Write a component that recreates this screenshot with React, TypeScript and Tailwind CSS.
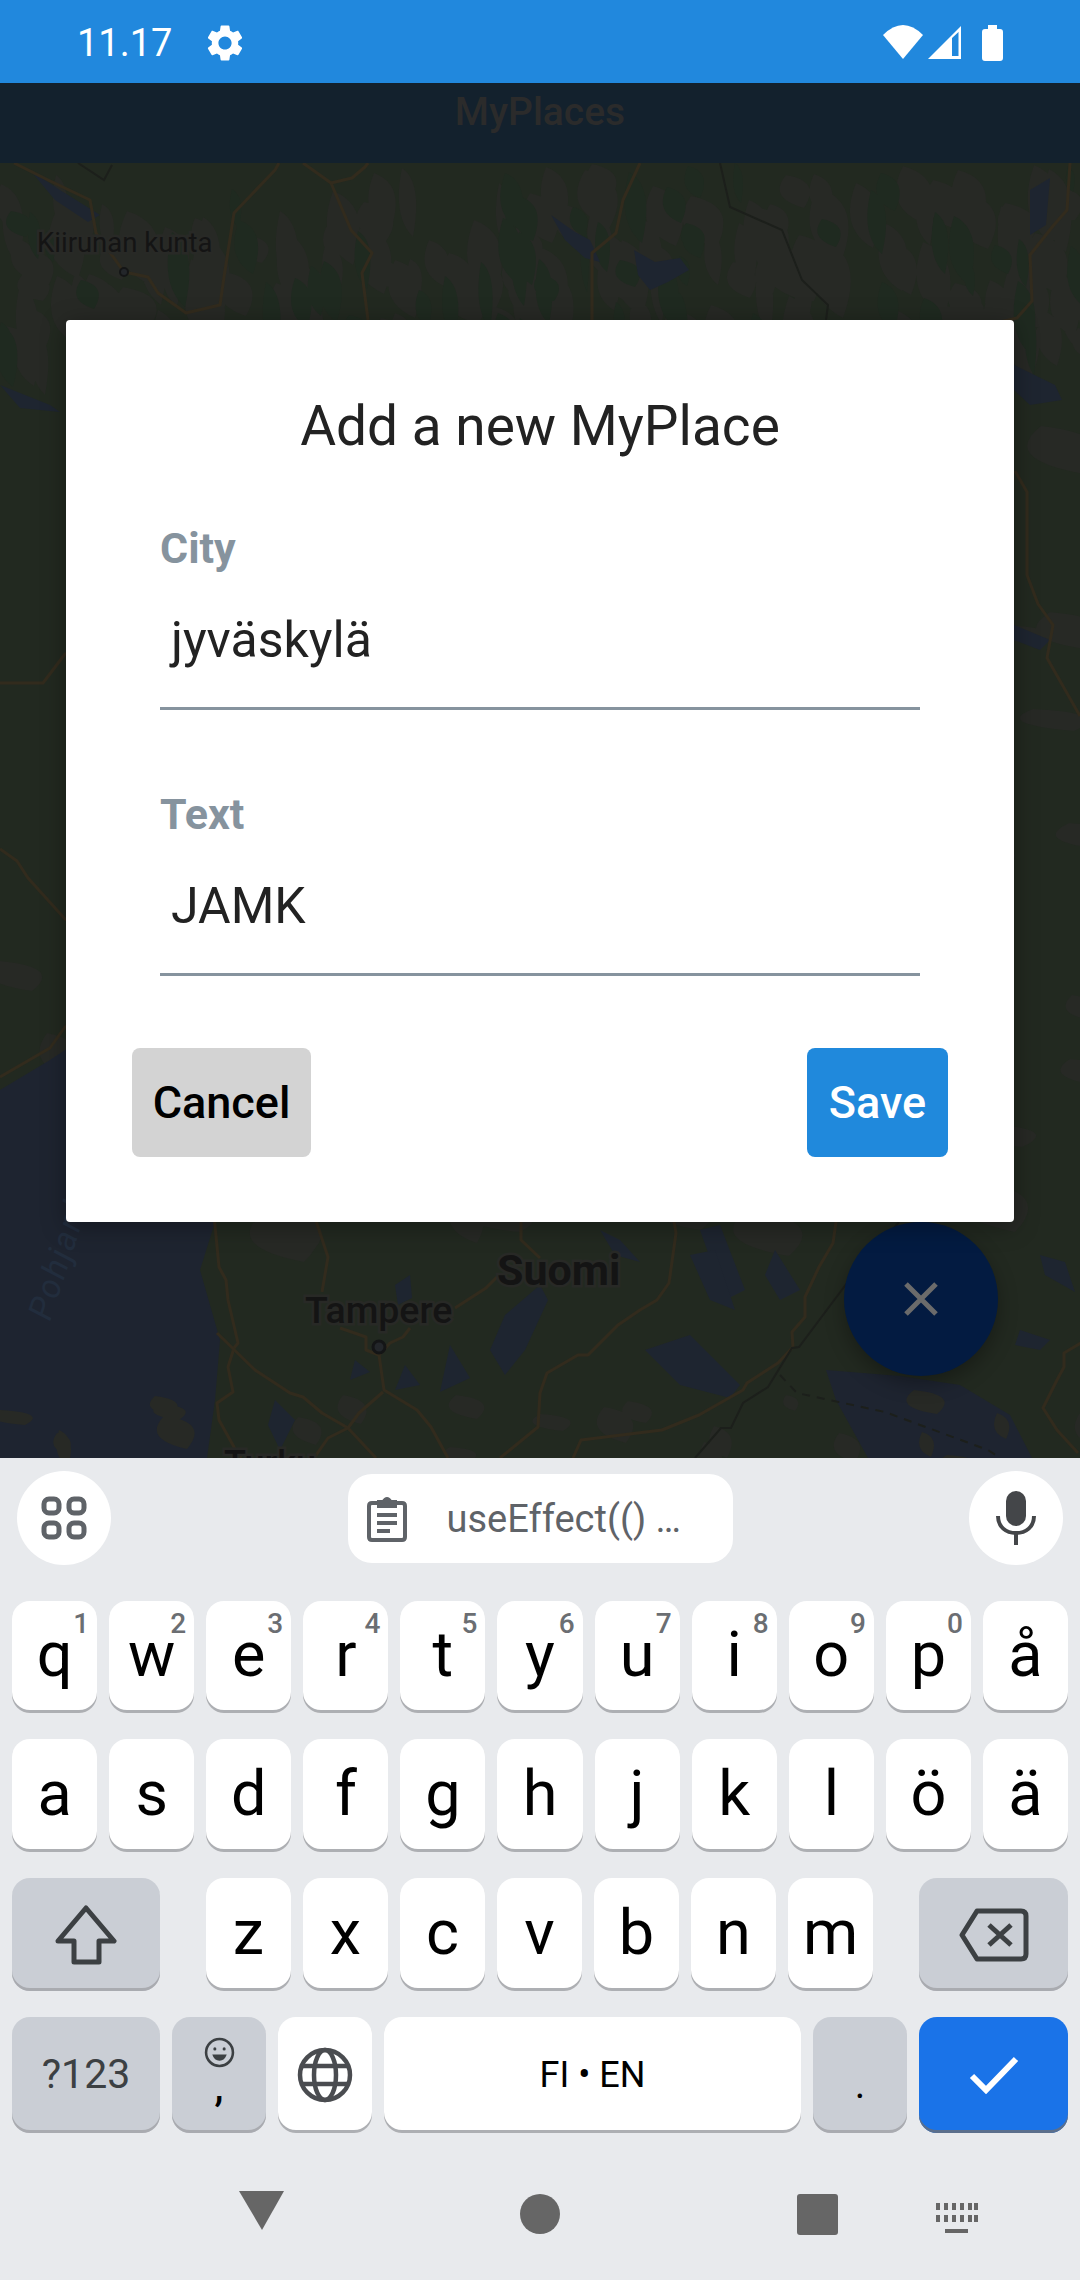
// App.tsx
const ROW_ONE = [
  ['q', '1'], ['w', '2'], ['e', '3'], ['r', '4'], ['t', '5'], ['y', '6'],
  ['u', '7'], ['i', '8'], ['o', '9'], ['p', '0'], ['å', ''],
];
const ROW_TWO = ['a', 's', 'd', 'f', 'g', 'h', 'j', 'k', 'l', 'ö', 'ä'];
const ROW_THREE = ['z', 'x', 'c', 'v', 'b', 'n', 'm'];

const ROADS = [
  'M14 163L48 180L90 200L96 233L124 272L148 277L158 293L186 313L220 305L224 277L234 213L275 170L279 163',
  'M303 163L331 183L351 230L372 253L362 273L368 320',
  'M331 183L352 178L365 167L368 163',
  'M640 163L623 200L616 233L592 253L592 320',
  'M1070 163L1067 210L1053 226L1030 255L1032 301L1017 318L1000 322',
  'M1015 471L1027 492L1027 575L1038 604L1053 625L1047 658L1080 716',
  'M0 683L43 683L65 654L80 650',
  'M0 849L17 861L28 878L65 919L80 925',
  'M0 1077L50 1048L65 1027L80 1018',
  'M214 1215L219 1267L226 1280L228 1300L238 1343L234 1348L228 1367L233 1392L217 1403L219 1420L234 1447L241 1458',
  'M217 1333L255 1370L290 1393L303 1397L322 1413L348 1428L376 1458',
  'M314 1215L328 1257L322 1292',
  'M340 1328L366 1337L366 1350L379 1355L384 1390L417 1410L431 1427L448 1458',
  'M379 1355L390 1343L403 1337L410 1328',
  'M455 1308L486 1288L497 1277',
  'M383 1392L359 1413L348 1428L328 1438L314 1458',
  'M521 1215L521 1240L540 1258',
  'M673 1215L676 1233L669 1283L657 1300L640 1310L618 1325L588 1355L578 1355L547 1373L540 1393L538 1427L500 1458',
  'M837 1215L833 1243L819 1267L805 1297L805 1317L792 1332L793 1347L778 1363L747 1383L743 1390L699 1415L662 1430L581 1440L573 1458',
  'M1081 1343L1064 1353L1064 1367L1057 1380L1043 1408L1057 1430L1078 1453',
];

const BORDERS = [
  'M720 163L730 207L782 230L802 280L828 305L826 320',
  'M899 1222L847 1283L799 1347L792 1348L768 1387L743 1403L731 1428L721 1428L695 1458',
  'M78 163L104 180L112 165',
];

const LAKES = [
  'M551 215L575 232L590 240L600 262L585 258L565 240Z',
  'M634 250L655 262L680 258L689 270L668 282L650 290L638 275Z',
  'M30 170L60 190L100 215L88 222L55 200Z',
  'M700 1230L720 1225L745 1290L725 1300Z',
  'M775 1250L800 1290L780 1300L765 1275Z',
  'M645 1350L690 1335L740 1385L730 1398L680 1385Z',
  'M690 1255L715 1250L735 1310L710 1300Z',
  'M600 1230L615 1255L640 1262L620 1240Z',
  'M505 1315L540 1285L548 1300L525 1350L505 1375L490 1350Z',
  'M395 1285L410 1275L412 1298L398 1305Z',
  'M275 1400L295 1420L280 1450L268 1425Z',
  'M355 1360L370 1372L350 1380Z',
  'M405 1365L420 1385L395 1390Z',
  'M450 1345L470 1378L440 1392Z',
  'M1040 1255L1065 1262L1075 1292L1045 1275Z',
  'M1020 1330L1050 1340L1040 1350L1015 1345Z',
  'M1014 365L1055 385L1062 400L1030 405L1014 390Z',
  'M1014 625L1050 640L1040 650L1014 640Z',
  'M1030 190L1050 178L1046 225L1030 235Z',
  'M0 385L50 405L60 412L20 408Z',
];

// Leaf shaped terrain blotches, seeded so every render draws the same map
const scatter = (seed: number, count: number, minY: number, maxY: number, w: number, h: number) => {
  let s = seed;
  const rnd = () => {
    s = (s * 16807) % 2147483647;
    return s / 2147483647;
  };
  const out: string[] = [];
  for (let i = 0; i < count; i++) {
    const x = rnd() * 1080;
    const y = minY + rnd() * (maxY - minY);
    const bw = w * (0.5 + rnd());
    const bh = h * (0.5 + rnd());
    out.push(
      `M${x.toFixed(0)} ${y.toFixed(0)}Q${(x + bw).toFixed(0)} ${(y + bh * 0.2).toFixed(0)} ${(x + bw * 0.5).toFixed(0)} ${(y + bh).toFixed(0)}Q${(x - bw * 0.5).toFixed(0)} ${(y + bh * 0.7).toFixed(0)} ${x.toFixed(0)} ${y.toFixed(0)}Z`,
    );
  }
  return out.join('');
};

const MapBackground = () => (
  <svg viewBox="0 163 1080 1295" className="absolute inset-0 h-full w-full">
    <rect x="0" y="163" width="1080" height="1295" fill="#222920" />
    <path d={scatter(77, 150, 163, 330, 34, 56)} fill="#272925" />
    <path d={scatter(91, 60, 163, 330, 20, 50)} fill="#1f2a20" />
    <path d={scatter(51, 110, 330, 1220, 60, 34)} fill="#272925" />
    <path d="M0 1090L50 1060L80 1040L190 1100L215 1222L200 1270L220 1340L215 1400L207 1458L0 1458Z" fill="#1e2430" />
    <path d="M868 1458L836 1400L826 1370L900 1376L960 1385L1010 1415L1032 1458Z" fill="#1e2430" />
    <path d={scatter(33, 22, 1385, 1458, 34, 24)} fill="#272925" />
    {LAKES.map((d, i) => <path key={i} d={d} fill="#1e2530" />)}
    {ROADS.map((d, i) => (
      <path key={i} d={d} fill="none" stroke="#322b1d" strokeWidth="3" strokeLinejoin="round" />
    ))}
    {BORDERS.map((d, i) => <path key={i} d={d} fill="none" stroke="#1c1f1b" strokeWidth="2" />)}
    <path d="M780 1375L797 1393L885 1412L988 1450L1000 1458" fill="none" stroke="#1c1f1b" strokeWidth="2" strokeDasharray="8 7" />
    <circle cx="124" cy="272" r="4" fill="#23262a" stroke="#141516" strokeWidth="2" />
    <circle cx="379" cy="1347" r="6" fill="#23262a" stroke="#141516" strokeWidth="3" />
    <g fontFamily="Roboto, sans-serif" fill="#141414" stroke="#282926" strokeWidth="5" style={{ paintOrder: 'stroke' }}>
      <text x="37" y="252" fontSize="27.500">Kiirunan kunta</text>
      <text x="305" y="1323" fontSize="37.500" fontWeight="500">Tampere</text>
      <text x="497" y="1285" fontSize="43" fontWeight="700">Suomi</text>
      <text x="224" y="1476" fontSize="36" fontWeight="500">Turku</text>
    </g>
    <text x="0" y="0" transform="translate(50 1322) rotate(-72)" fontFamily="Roboto, sans-serif" fontStyle="italic" fontSize="34" letterSpacing="2" fill="#222d3d">Pohjanla</text>
  </svg>
);

const StatusBar = () => (
  <div className="flex h-[83px] shrink-0 items-start bg-[#2188dd] text-white">
    <span className="ml-[77px] mt-[21px] text-[38px] leading-[44px]">11.17</span>
    <svg viewBox="0 0 24 24" className="ml-[31px] mt-[21px] h-[44px] w-[44px]" fill="#fff">
      <path d="M19.14 12.94c.04-.3.06-.61.06-.94 0-.32-.02-.64-.07-.94l2.03-1.58c.18-.14.23-.41.12-.61l-1.92-3.32c-.12-.22-.37-.29-.59-.22l-2.39.96c-.5-.38-1.03-.7-1.62-.94l-.36-2.54c-.04-.24-.24-.41-.48-.41h-3.84c-.24 0-.43.17-.47.41l-.36 2.54c-.59.24-1.13.57-1.62.94l-2.39-.96c-.22-.08-.47 0-.59.22L2.74 8.87c-.12.21-.08.47.12.61l2.03 1.58c-.05.3-.09.63-.09.94s.02.64.07.94l-2.03 1.58c-.18.14-.23.41-.12.61l1.92 3.32c.12.22.37.29.59.22l2.39-.96c.5.38 1.03.7 1.62.94l.36 2.54c.05.24.24.41.48.41h3.84c.24 0 .44-.17.47-.41l.36-2.54c.59-.24 1.13-.56 1.62-.94l2.39.96c.22.08.47 0 .59-.22l1.92-3.32c.12-.22.07-.47-.12-.61l-2.01-1.58zM12 15.6c-1.98 0-3.6-1.62-3.6-3.6s1.62-3.6 3.6-3.6 3.6 1.62 3.6 3.6-1.62 3.6-3.6 3.6z" />
    </svg>
    <svg viewBox="0 0 125 40" className="ml-auto mr-[72px] mt-[24px] h-[40px] w-[125px]" fill="#fff">
      <path d="M0 11Q20 -9 40 11L20 35Z" />
      <path fillRule="evenodd" d="M45 35L78 2V35ZM69 14V32H75.500V8Z" />
      <path d="M105 1H114V5H117Q120 5 120 8V34Q120 37 117 37H102Q99 37 99 34V8Q99 5 102 5H105Z" />
    </svg>
  </div>
);

const Field = ({ label, value }: { label: string; value: string }) => (
  <div>
    <div className="h-[50px] text-[43px] font-bold leading-[50px] text-[#86939e]">{label}</div>
    <div className="flex h-[137px] items-center border-b-[3px] border-[#86939e] pl-[11px] text-[50px] text-[#222]">
      {value}
    </div>
  </div>
);

const AddDialog = () => (
  <div className="absolute left-[66px] top-[320px] h-[902px] w-[948px] rounded-[4px] bg-white pt-[74px] shadow-[0_4px_24px_rgba(0,0,0,0.35)]">
    <div className="text-center text-[55px] leading-[64px] text-[#222]">Add a new MyPlace</div>
    <div className="mx-[94px] mt-[65px] flex flex-col gap-[79px]">
      <Field label="City" value="jyväskylä" />
      <Field label="Text" value="JAMK" />
    </div>
    <div className="mx-[66px] mt-[72px] flex justify-between">
      <div className="flex h-[109px] w-[179px] items-center justify-center rounded-[8px] bg-[#d3d3d3] text-[45px] font-medium text-black">
        Cancel
      </div>
      <div className="flex h-[109px] w-[141px] items-center justify-center rounded-[8px] bg-[#2089dc] text-[45px] font-medium text-white">
        Save
      </div>
    </div>
  </div>
);

const Key = ({ label, hint, className }: { label: string; hint?: string; className?: string }) => (
  <div className={`relative flex items-center justify-center rounded-[18px] bg-white pb-[3px] text-[63px] text-black shadow-[inset_0_-3px_0_#adafb3] ${className ?? ''}`}>
    {label}
    {hint && (
      <span className="absolute right-[8px] top-[6px] text-[28px] font-medium leading-[33px] text-[#6b6e72]">{hint}</span>
    )}
  </div>
);

const ModKey = ({ children, className }: { children: React.ReactNode; className: string }) => (
  <div className={`flex items-center justify-center rounded-[18px] bg-[#caced5] shadow-[inset_0_-3px_0_#a9abb0] ${className}`}>
    {children}
  </div>
);

const Keyboard = () => (
  <div className="flex h-[822px] shrink-0 flex-col bg-[#e8eaed]">
    <div className="flex h-[143px] items-start justify-between px-[17px] pt-[13px]">
      <div className="flex h-[94px] w-[94px] items-center justify-center rounded-full bg-white">
        <svg viewBox="0 0 46 44" className="h-[44px] w-[46px]" fill="none" stroke="#5f6368" strokeWidth="5">
          <rect x="3" y="3" width="15" height="14" rx="5" />
          <rect x="28" y="3" width="15" height="14" rx="5" />
          <rect x="3" y="27" width="15" height="14" rx="5" />
          <rect x="28" y="27" width="15" height="14" rx="5" />
        </svg>
      </div>
      <div className="mt-[3px] flex h-[89px] w-[385px] items-center rounded-[24px] bg-white pl-[19px]">
        <svg viewBox="0 0 40 46" className="h-[46px] w-[40px]" fill="none" stroke="#5f6368" strokeWidth="4">
          <path d="M12 7H5Q2 7 2 10V41Q2 44 5 44H35Q38 44 38 41V10Q38 7 35 7H28" />
          <path d="M12 10V6H16.500Q20 0 23.500 6H28V10Z" fill="#5f6368" />
          <path d="M10 19H30M10 27H30M10 35H23" />
        </svg>
        <span className="ml-[40px] whitespace-nowrap text-[38px] leading-[44px] text-[#5f6368]">useEffect(() …</span>
      </div>
      <div className="flex h-[94px] w-[94px] items-center justify-center rounded-full bg-white">
        <svg viewBox="0 0 40 54" className="h-[54px] w-[40px]" fill="#444649">
          <rect x="10" y="0" width="20" height="35" rx="10" />
          <path d="M2 25C2 36 10 42 20 42S38 36 38 25" fill="none" stroke="#444649" strokeWidth="4" />
          <rect x="18" y="40" width="4" height="14" />
        </svg>
      </div>
    </div>

    <div className="flex flex-col gap-[26px] px-[12px]">
      <div className="flex h-[112px] gap-[12px]">
        {ROW_ONE.map(([l, h]) => <Key key={l} label={l} hint={h} className="flex-1" />)}
      </div>
      <div className="flex h-[113px] gap-[12px]">
        {ROW_TWO.map((l) => <Key key={l} label={l} className="flex-1" />)}
      </div>
      <div className="flex h-[113px] justify-between">
        <ModKey className="w-[148px]">
          <svg viewBox="0 0 62 60" className="h-[60px] w-[62px]" fill="none" stroke="#3c4043" strokeWidth="5" strokeLinejoin="round">
            <path d="M31 3L59 36H44V57H19V36H3Z" />
          </svg>
        </ModKey>
        <div className="flex gap-[12px]">
          {ROW_THREE.map((l) => <Key key={l} label={l} className="w-[85px]" />)}
        </div>
        <ModKey className="w-[149px]">
          <svg viewBox="0 0 70 54" className="h-[54px] w-[70px]" fill="none" stroke="#3c4043" strokeWidth="5" strokeLinejoin="round">
            <path d="M18 3H62Q67 3 67 8V46Q67 51 62 51H18L3 27Z" />
            <path d="M30 17L52 37M52 17L30 37" />
          </svg>
        </ModKey>
      </div>
      <div className="flex h-[116px] gap-[12px]">
        <ModKey className="w-[148px] text-[41px] text-[#3c4043]">?123</ModKey>
        <ModKey className="w-[94px] flex-col">
          <svg viewBox="0 0 30 30" className="mb-[2px] h-[31px] w-[31px]" fill="none" stroke="#3c4043" strokeWidth="2.500">
            <circle cx="15" cy="15" r="13" />
            <circle cx="10.500" cy="11.500" r="1.500" fill="#3c4043" stroke="none" />
            <circle cx="19.500" cy="11.500" r="1.500" fill="#3c4043" stroke="none" />
            <path d="M8 17H22Q20 23 15 23T8 17Z" fill="#3c4043" stroke="none" />
          </svg>
          <span className="h-[44px] text-[40px] font-medium leading-[36px] text-black">,</span>
        </ModKey>
        <div className="flex w-[94px] items-center justify-center rounded-[18px] bg-white shadow-[inset_0_-3px_0_#adafb3]">
          <svg viewBox="0 0 56 56" className="h-[56px] w-[56px]" fill="none" stroke="#4a4c50" strokeWidth="4.500">
            <circle cx="28" cy="28" r="25" />
            <ellipse cx="28" cy="28" rx="11" ry="25" />
            <path d="M6 19H50M6 37H50" />
          </svg>
        </div>
        <div className="flex flex-1 items-center justify-center rounded-[18px] bg-white text-[36px] text-black shadow-[inset_0_-3px_0_#adafb3]">
          FI • EN
        </div>
        <ModKey className="w-[94px] pt-[20px] text-[40px] leading-[40px] text-black">.</ModKey>
        <div className="flex w-[149px] items-center justify-center rounded-[18px] bg-[#1a73e8] shadow-[inset_0_-3px_0_#5b6f8c]">
          <svg viewBox="0 0 50 38" className="h-[38px] w-[50px]" fill="none" stroke="#fff" strokeWidth="6">
            <path d="M3 20L17 34L47 3" />
          </svg>
        </div>
      </div>
    </div>

    <div className="relative flex flex-1 items-center">
      <svg viewBox="0 0 1080 147" className="h-[147px] w-full" fill="#666">
        <path d="M239 58H284L262 97Z" />
        <circle cx="540" cy="81" r="20" />
        <rect x="797" y="61" width="41" height="41" rx="3" />
        <path d="M936 70h4v7h-4zM944 70h4v7h-4zM952 70h4v7h-4zM960 70h4v7h-4zM968 70h4v7h-4zM974 70h4v7h-4zM936 82h4v7h-4zM944 82h4v7h-4zM952 82h4v7h-4zM960 82h4v7h-4zM968 82h4v7h-4zM974 82h4v7h-4zM945 96h23v4h-23z" />
      </svg>
    </div>
  </div>
);

export default function App() {
  return (
    <div className="relative flex h-[2280px] w-[1080px] flex-col overflow-hidden font-['Roboto',sans-serif]">
      <StatusBar />
      <div className="h-[80px] shrink-0 bg-[#13212d] pt-[6px] text-center text-[39px] font-medium leading-[46px] text-[#2b2b2b]">
        MyPlaces
      </div>
      <div className="relative flex-1 overflow-hidden">
        <MapBackground />
      </div>
      <Keyboard />

      <div className="absolute left-[844px] top-[1222px] flex h-[154px] w-[154px] items-center justify-center rounded-full bg-[#031b41] shadow-[0_8px_20px_rgba(0,0,0,0.3)]">
        <svg viewBox="0 0 34 34" className="h-[34px] w-[34px]" stroke="#6b6b6b" strokeWidth="5">
          <path d="M2 2L32 32M32 2L2 32" />
        </svg>
      </div>
      <AddDialog />
    </div>
  );
}
